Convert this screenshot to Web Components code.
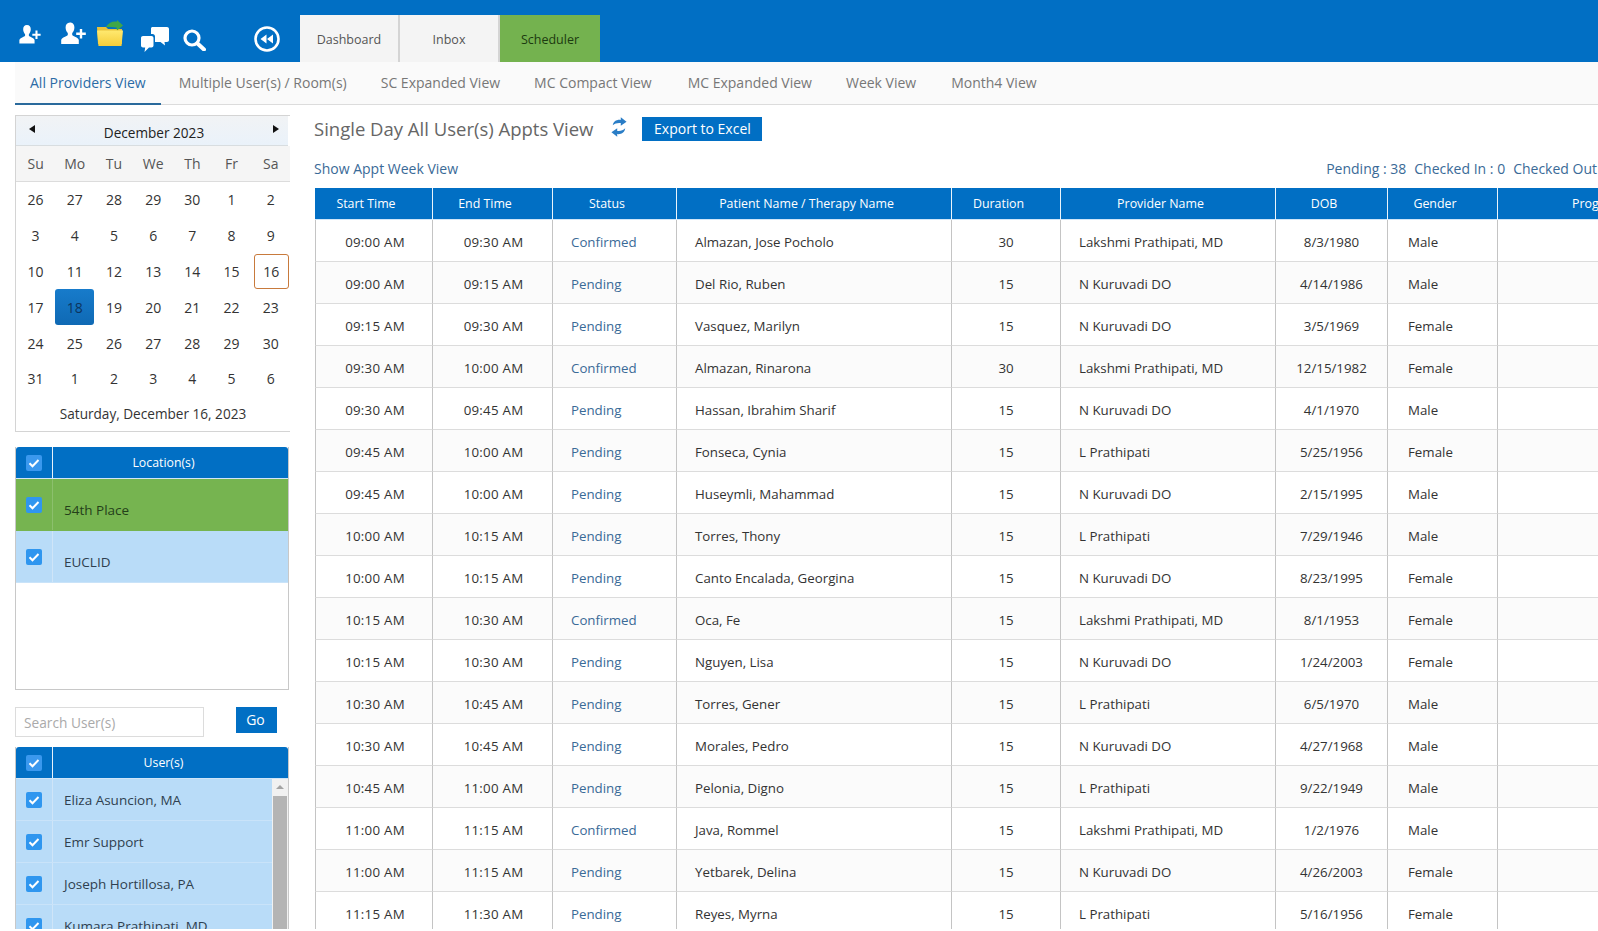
<!DOCTYPE html>
<html>
<head>
<meta charset="utf-8">
<title>Scheduler</title>
<style>
  html, body { margin: 0; padding: 0; height: 100%; overflow: hidden; background: #fff; }
  body { font-family: "Open Sans", "Noto Sans", sans-serif; color: #333; }
  app-shell { height: 929px; }
</style>
</head>
<body>
<app-shell>
  <top-bar slot="top"></top-bar>
  <view-tabs slot="top"></view-tabs>
  <div slot="side" class="side-stack">
    <mini-calendar></mini-calendar>
    <check-panel title="Location(s)" size="tall" style="height:243px;margin-top:15px">
      <check-row label="54th Place" tone="green"></check-row>
      <check-row label="EUCLID"></check-row>
    </check-panel>
    <user-search></user-search>
    <check-panel title="User(s)" scroll style="margin-top:10px">
      <check-row label="Eliza Asuncion, MA"></check-row>
      <check-row label="Emr Support"></check-row>
      <check-row label="Joseph Hortillosa, PA"></check-row>
      <check-row label="Kumara Prathipati, MD"></check-row>
    </check-panel>
  </div>
  <appts-view slot="main"></appts-view>
</app-shell>

<script>
const personIcon = (w, h) => `
  <svg width="${w}" height="${h}" viewBox="0 0 25 22" fill="#fff">
    <path d="M9 0C6 0 4.6 2.2 4.6 5c0 2.3 1 4.4 2.2 5.6v1.9C6 14 .9 14.500 .2 17.500V21.500h17.600v-4C17.100 14.500 12 14 11.200 12.500v-1.900c1.200-1.200 2.200-3.300 2.200-5.600C13.400 2.200 12 0 9 0z"/>
    <path d="M18.800 6.500h2.400v3.600h3.600v2.400h-3.600v3.600h-2.400v-3.600h-3.600v-2.400h3.600z"/>
  </svg>`

class TopBar extends HTMLElement {
  constructor () {
    super()
    this.shadow = this.attachShadow({ mode: 'open' })
  }

  connectedCallback () {
    this.render()
  }

  render () {
    this.shadow.innerHTML =
      /* html */`
        <style>
          :host {
            display: flex;
            height: 62px;
            background: #016fc4;
            padding-left: 19px;
            box-sizing: border-box;
            overflow: hidden;
          }
          .icons { display: flex; align-items: flex-start; width: 281px; flex: none; }
          svg { display: block; flex: none; }
          .i1 { margin-top: 25px; }
          .i2 { margin: 22px 0 0 20px; }
          .i3 { margin: 20px 0 0 10px; }
          .i4 { margin: 27px 0 0 17px; }
          .i5 { margin: 29px 0 0 14px; }
          .i6 { margin: 26px 0 0 48px; }
          .tabs { display: flex; margin-top: 15px; }
          .tab {
            display: flex;
            align-items: center;
            justify-content: center;
            box-sizing: border-box;
            width: 100px;
            height: 47px;
            padding-top: 1px;
            background: #f4f4f4;
            border-right: 2px solid #d4d4d4;
            color: #555;
            font-size: 12.500px;
          }
          .tab.on { background: #74b24f; border-right: 0; color: #1c3a10; }
        </style>
        <div class="icons">
          <span class="i1">${personIcon(22, 19)}</span>
          <span class="i2">${personIcon(25, 23)}</span>
          <svg class="i3" width="28" height="27" viewBox="0 0 28 27">
            <defs>
              <linearGradient id="fold" x1="0" y1="0" x2="0" y2="1">
                <stop offset="0" stop-color="#ffe96f"/>
                <stop offset="1" stop-color="#f5cd3a"/>
              </linearGradient>
            </defs>
            <path d="M1 7h9l2 2h14v15H2z" fill="#e9c23a"/>
            <path d="M10 7c2-4 6-6 11-5.500L21 0l6 5.500-6 5-.5-3c-4-1-7-.5-10.500-.5z" fill="#3fa648"/>
            <path d="M1 10.500h26l-1.500 15.500H2.500z" fill="url(#fold)"/>
          </svg>
          <svg class="i4" width="28" height="25" viewBox="0 0 28 25" fill="#fff">
            <path d="M10 1.500C10 .7 10.700 0 11.500 0H26c1.100 0 2 .9 2 2v11c0 1.100-.9 2-2 2h-2.500l.5 3.500-4.500-3.500H14V9.500C14 8 13 7 11.500 7H10z"/>
            <path d="M2 9h8.500c1.100 0 2 .9 2 2v7.500c0 1.100-.9 2-2 2H8L3.500 25l.7-4.500H2c-1.100 0-2-.9-2-2V11c0-1.100.9-2 2-2z"/>
          </svg>
          <svg class="i5" width="23" height="22" viewBox="0 0 23 22" fill="none" stroke="#fff">
            <circle cx="9" cy="9" r="7" stroke-width="3.200"/>
            <path d="M14.500 14.500L21 20.500" stroke-width="4" stroke-linecap="round"/>
          </svg>
          <svg class="i6" width="26" height="26" viewBox="0 0 26 26">
            <circle cx="13" cy="13" r="11.500" fill="none" stroke="#fff" stroke-width="2.600"/>
            <path d="M12.500 8.500v9L6.500 13zM19 8.500v9L13 13z" fill="#fff"/>
          </svg>
        </div>
        <div class="tabs">
          <div class="tab">Dashboard</div>
          <div class="tab">Inbox</div>
          <div class="tab on">Scheduler</div>
        </div>
      `
  }
}
customElements.define('top-bar', TopBar)

class ViewTabs extends HTMLElement {
  constructor () {
    super()
    this.shadow = this.attachShadow({ mode: 'open' })
  }

  connectedCallback () {
    const tabs = ['All Providers View', 'Multiple User(s) / Room(s)', 'SC Expanded View', 'MC Compact View', 'MC Expanded View', 'Week View', 'Month4 View']
    this.shadow.innerHTML =
      /* html */`
        <style>
          :host {
            display: flex;
            height: 43px;
            margin-left: 15px;
            box-sizing: border-box;
            background: #fafafa;
            border-bottom: 1px solid #dcdcdc;
            font-size: 14px;
            color: #777;
          }
          .tab { padding: 0 17px 2px; height: 43px; line-height: 41px; box-sizing: border-box; white-space: nowrap; }
          .tab:first-of-type {
            padding: 0 15px 0;
            color: #2a6ba6;
            border-bottom: 2px solid #2a6a9c;
          }
          .tab:nth-of-type(2) { padding-left: 18px; }
          .tab:nth-of-type(4) { padding-right: 19px; }
          .tab:nth-of-type(6) { padding-right: 18px; }
        </style>
        ${tabs.map(t => `<div class="tab">${t}</div>`).join('')}
      `
  }
}
customElements.define('view-tabs', ViewTabs)

class MiniCalendar extends HTMLElement {
  constructor () {
    super()
    this.shadow = this.attachShadow({ mode: 'open' })
  }

  connectedCallback () {
    const days = [26, 27, 28, 29, 30, 1, 2, 3, 4, 5, 6, 7, 8, 9, 10, 11, 12, 13, 14, 15, 16, 17, 18, 19, 20, 21, 22, 23, 24, 25, 26, 27, 28, 29, 30, 31, 1, 2, 3, 4, 5, 6]
    this.shadow.innerHTML =
      /* html */`
        <style>
          :host {
            display: block;
            box-sizing: border-box;
            width: 276px;
            height: 317px;
            border: 1px solid #d4d4d4;
            font-size: 14px;
            color: #333;
          }
          .head {
            display: flex;
            justify-content: space-between;
            align-items: flex-start;
            height: 30px;
            margin-right: 2px;
            padding: 0 9px 0 13px;
            box-sizing: border-box;
            background: linear-gradient(#f1f3f5, #eaf2fa);
            border-bottom: 1px solid #d8dde0;
          }
          .title { line-height: 33px; font-size: 13.600px; color: #222; }
          .prev, .next { width: 0; height: 0; margin-top: 9px; border: 4px solid transparent; }
          .prev { border-right: 6px solid #111; border-left: 0; }
          .next { border-left: 6px solid #111; border-right: 0; }
          .grid { display: grid; grid-template-columns: repeat(7, 39.200px); }
          .dow {
            display: flex;
            align-items: center;
            justify-content: center;
            height: 36px;
            background: #f5f5f5;
            border-bottom: 1px solid #dcdcdc;
            box-sizing: border-box;
            color: #555;
          }
          .d {
            display: flex;
            align-items: center;
            justify-content: center;
            height: 35.800px;
            box-sizing: border-box;
          }
          .today { border: 1px solid #c87a3c; border-radius: 3px; margin-left: 2.400px; margin-right: 1.400px; }
          .sel { background: linear-gradient(#177bcb, #0f69b4); border-radius: 3px; color: #0c3560; }
          .foot { text-align: center; font-size: 13.600px; line-height: 34px; margin-right: 0; }
        </style>
        <div class="head">
          <div class="prev"></div>
          <div class="title">December 2023</div>
          <div class="next"></div>
        </div>
        <div class="grid">
          ${['Su', 'Mo', 'Tu', 'We', 'Th', 'Fr', 'Sa'].map(d => `<div class="dow">${d}</div>`).join('')}
          ${days.map((d, i) => `<div class="d${i === 20 ? ' today' : ''}${i === 22 ? ' sel' : ''}">${d}</div>`).join('')}
        </div>
        <div class="foot">Saturday, December 16, 2023</div>
      `
  }
}
customElements.define('mini-calendar', MiniCalendar)

const tick = `
  <svg width="16" height="16" viewBox="0 0 16 16">
    <rect width="16" height="16" rx="2" fill="var(--box, #2f96ef)"/>
    <path d="M3.500 8.200l3 3L12.500 5" fill="none" stroke="#fff" stroke-width="2"/>
  </svg>`

class CheckRow extends HTMLElement {
  constructor () {
    super()
    this.shadow = this.attachShadow({ mode: 'open' })
  }

  connectedCallback () {
    const green = this.getAttribute('tone') === 'green'
    this.shadow.innerHTML =
      /* html */`
        <style>
          :host {
            display: flex;
            height: var(--row-h, 42px);
            background: ${green ? '#76b450' : '#b9dcf8'};
            color: ${green ? '#24401a' : '#2f3f4f'};
            border-bottom: 1px solid ${green ? '#76b450' : '#c9e3f9'};
            box-sizing: border-box;
            font-size: 13.500px;
          }
          .box {
            width: 37px;
            flex: none;
            display: flex;
            align-items: center;
            justify-content: center;
            padding-right: 1px;
            box-sizing: border-box;
            border-right: 1px solid ${green ? '#8cc06d' : '#cfe5f8'};
          }
          svg { display: block; }
          .label { display: flex; align-items: center; padding: var(--label-down, 0) 0 0 11px; box-sizing: border-box; white-space: nowrap; }
        </style>
        <div class="box">${tick}</div>
        <div class="label">${this.getAttribute('label')}</div>
      `
  }
}
customElements.define('check-row', CheckRow)

class CheckPanel extends HTMLElement {
  constructor () {
    super()
    this.shadow = this.attachShadow({ mode: 'open' })
  }

  connectedCallback () {
    const tall = this.getAttribute('size') === 'tall'
    this.shadow.innerHTML =
      /* html */`
        <style>
          :host {
            display: block;
            position: relative;
            width: 274px;
            box-sizing: border-box;
            border: 1px solid #c8c8c8;
            border-top: 0;
            --row-h: ${tall ? '52px' : '42px'};
            --label-down: ${tall ? '10px' : '0'};
            overflow: hidden;
          }
          .head {
            display: flex;
            height: 32px;
            background: #016fc4;
            border-radius: 3px 3px 0 0;
            color: #fff;
            font-size: 12.300px;
            box-sizing: border-box;
            border-bottom: 1px solid #cfe5f8;
            --box: #3a98ee;
          }
          .chk {
            width: 37px;
            flex: none;
            display: flex;
            align-items: center;
            justify-content: center;
            box-sizing: border-box;
            border-right: 1px solid #e8f2fb;
          }
          svg { display: block; }
          .name { flex: 1; text-align: center; line-height: 32px; padding-right: 14px; }
          .scrollbar {
            position: absolute;
            top: 32px;
            right: 0;
            bottom: 0;
            width: 16px;
            background: #f1f1f1;
          }
          .scrollbar .up { height: 17px; display: flex; justify-content: center; padding-top: 6px; box-sizing: border-box; }
          .scrollbar .up i { width: 0; height: 0; border: 4px solid transparent; border-bottom: 4px solid #a3a3a3; border-top: 0; }
          .scrollbar .thumb { height: 300px; background: #b4b4b4; margin: 0 1px; }
        </style>
        <div class="head">
          <div class="chk">${tick}</div>
          <div class="name">${this.getAttribute('title')}</div>
        </div>
        <slot></slot>
        ${this.hasAttribute('scroll') ? '<div class="scrollbar"><div class="up"><i></i></div><div class="thumb"></div></div>' : ''}
      `
  }
}
customElements.define('check-panel', CheckPanel)

class UserSearch extends HTMLElement {
  constructor () {
    super()
    this.shadow = this.attachShadow({ mode: 'open' })
  }

  connectedCallback () {
    this.shadow.innerHTML =
      /* html */`
        <style>
          :host {
            display: flex;
            align-items: flex-start;
            margin-top: 17px;
            height: 30px;
          }
          input {
            width: 189px;
            height: 30px;
            box-sizing: border-box;
            border: 1px solid #dcdcdc;
            padding: 1px 8px 0;
            font: 13.700px "Open Sans", "Noto Sans", sans-serif;
            outline: none;
          }
          input::placeholder { color: #aaa; opacity: 1; }
          button {
            width: 41px;
            height: 26px;
            margin-left: 32px;
            border: 0;
            padding: 0 2px 1px 0;
            background: #016fc4;
            color: #fff;
            font: 14px "Open Sans", "Noto Sans", sans-serif;
          }
        </style>
        <input placeholder="Search User(s)">
        <button>Go</button>
      `
  }
}
customElements.define('user-search', UserSearch)

class ApptsView extends HTMLElement {
  constructor () {
    super()
    this.shadow = this.attachShadow({ mode: 'open' })
  }

  connectedCallback () {
    const L = 'Lakshmi Prathipati, MD'
    const N = 'N Kuruvadi DO'
    const P = 'L Prathipati'
    const rows = [
      ['09:00 AM', '09:30 AM', 'Confirmed', 'Almazan, Jose Pocholo', 30, L, '8/3/1980', 'Male'],
      ['09:00 AM', '09:15 AM', 'Pending', 'Del Rio, Ruben', 15, N, '4/14/1986', 'Male'],
      ['09:15 AM', '09:30 AM', 'Pending', 'Vasquez, Marilyn', 15, N, '3/5/1969', 'Female'],
      ['09:30 AM', '10:00 AM', 'Confirmed', 'Almazan, Rinarona', 30, L, '12/15/1982', 'Female'],
      ['09:30 AM', '09:45 AM', 'Pending', 'Hassan, Ibrahim Sharif', 15, N, '4/1/1970', 'Male'],
      ['09:45 AM', '10:00 AM', 'Pending', 'Fonseca, Cynia', 15, P, '5/25/1956', 'Female'],
      ['09:45 AM', '10:00 AM', 'Pending', 'Huseymli, Mahammad', 15, N, '2/15/1995', 'Male'],
      ['10:00 AM', '10:15 AM', 'Pending', 'Torres, Thony', 15, P, '7/29/1946', 'Male'],
      ['10:00 AM', '10:15 AM', 'Pending', 'Canto Encalada, Georgina', 15, N, '8/23/1995', 'Female'],
      ['10:15 AM', '10:30 AM', 'Confirmed', 'Oca, Fe', 15, L, '8/1/1953', 'Female'],
      ['10:15 AM', '10:30 AM', 'Pending', 'Nguyen, Lisa', 15, N, '1/24/2003', 'Female'],
      ['10:30 AM', '10:45 AM', 'Pending', 'Torres, Gener', 15, P, '6/5/1970', 'Male'],
      ['10:30 AM', '10:45 AM', 'Pending', 'Morales, Pedro', 15, N, '4/27/1968', 'Male'],
      ['10:45 AM', '11:00 AM', 'Pending', 'Pelonia, Digno', 15, P, '9/22/1949', 'Male'],
      ['11:00 AM', '11:15 AM', 'Confirmed', 'Java, Rommel', 15, L, '1/2/1976', 'Male'],
      ['11:00 AM', '11:15 AM', 'Pending', 'Yetbarek, Delina', 15, N, '4/26/2003', 'Female'],
      ['11:15 AM', '11:30 AM', 'Pending', 'Reyes, Myrna', 15, P, '5/16/1956', 'Female']
    ]
    const heads = ['Start Time', 'End Time', 'Status', 'Patient Name / Therapy Name', 'Duration', 'Provider Name', 'DOB', 'Gender', 'Progress Notes']
    const widths = [118, 120, 124, 275, 109, 215, 112, 110, 300]
    this.shadow.innerHTML =
      /* html */`
        <style>
          :host {
            display: block;
            font-size: 13.300px;
            color: #333;
            min-width: 0;
            overflow: hidden;
            padding: 10px 0 0 25px;
          }
          .titlebar { display: flex; align-items: flex-start; height: 42px; margin-left: -1px; }
          h1 { margin: 0; font-weight: 400; font-size: 18.500px; color: #666; white-space: nowrap; line-height: 28px; }
          .refresh { display: block; margin: 2px 0 0 18px; flex: none; }
          .export {
            width: 120px;
            height: 24px;
            margin: 2px 0 0 15px;
            background: #016fc4;
            color: #fff;
            font-size: 14px;
            line-height: 24px;
            text-align: center;
          }
          .links {
            display: flex;
            justify-content: space-between;
            width: 1283px;
            height: 31px;
            margin-left: -1px;
            font-size: 14px;
            line-height: 23px;
            color: #3a6a97;
            white-space: nowrap;
          }
          .links .counts span { margin-left: 8px; }
          table {
            border-collapse: separate;
            border-spacing: 0;
            table-layout: fixed;
            width: 1483px;
          }
          th {
            height: 31px;
            padding: 0 15px 0 0;
            background: #016fc4;
            color: #fff;
            font-weight: 400;
            font-size: 12.400px;
            border-right: 1px solid #eaf4fb;
            border-bottom: 1px solid #cfe5f8;
            white-space: nowrap;
            overflow: hidden;
          }
          th:last-child { text-align: left; padding: 0 0 0 74px; }
          td {
            padding: 2px 0 0;
            box-sizing: border-box;
            text-align: center;
            border-right: 1px solid #c4c4c4;
            border-bottom: 1px solid #dcdcdc;
            white-space: nowrap;
          }
          tbody td { height: 42px; }
          td:first-child { border-left: 1px solid #c4c4c4; }
          tr:nth-child(even) td { background: #fbfbfb; }
          td.time { letter-spacing: .25px; padding-left: 2px; }
          td.left { text-align: left; padding-left: 18px; }
          td.status { color: #3a6a97; }
          td.gender { text-align: left; padding-left: 20px; }
        </style>
        <div class="titlebar">
          <h1>Single Day All User(s) Appts View</h1>
          <svg class="refresh" width="16" height="20" viewBox="0 0 18 22" fill="#2a7dc6">
            <path d="M2 9C2.500 5 6 2.500 11 3V0l6.500 5L11 9.500V6.500C7.500 6 4.500 7 2 9z"/>
            <path d="M16 12.500C15.500 17 12 19.500 7 19v3L.5 17 7 12.500v3c3.500.5 6.500-.5 9-3z"/>
          </svg>
          <div class="export">Export to Excel</div>
        </div>
        <div class="links">
          <div>Show Appt Week View</div>
          <div class="counts">Pending : 38<span>Checked In : 0</span><span>Checked Out</span></div>
        </div>
        <table>
          <colgroup>${widths.map(w => `<col style="width:${w}px">`).join('')}</colgroup>
          <thead><tr>${heads.map(h => `<th>${h}</th>`).join('')}</tr></thead>
          <tbody>
            ${rows.map(r => `<tr>
              <td class="time">${r[0]}</td>
              <td class="time">${r[1]}</td>
              <td class="left status">${r[2]}</td>
              <td class="left">${r[3]}</td>
              <td>${r[4]}</td>
              <td class="left">${r[5]}</td>
              <td>${r[6]}</td>
              <td class="gender">${r[7]}</td>
              <td></td>
            </tr>`).join('')}
          </tbody>
        </table>
      `
  }
}
customElements.define('appts-view', ApptsView)

class AppShell extends HTMLElement {
  constructor () {
    super()
    this.shadow = this.attachShadow({ mode: 'open' })
  }

  connectedCallback () {
    this.shadow.innerHTML =
      /* html */`
        <style>
          :host { display: flex; flex-direction: column; overflow: hidden; background: #fff; }
          .body { display: grid; grid-template-columns: 275px 1fr; flex: 1; min-height: 0; padding-left: 15px; }
          .side { padding-top: 10px; overflow: hidden; }
          ::slotted(.side-stack) { display: flex; flex-direction: column; }
        </style>
        <slot name="top"></slot>
        <div class="body">
          <div class="side"><slot name="side"></slot></div>
          <slot name="main"></slot>
        </div>
      `
  }
}
customElements.define('app-shell', AppShell)
</script>
</body>
</html>
